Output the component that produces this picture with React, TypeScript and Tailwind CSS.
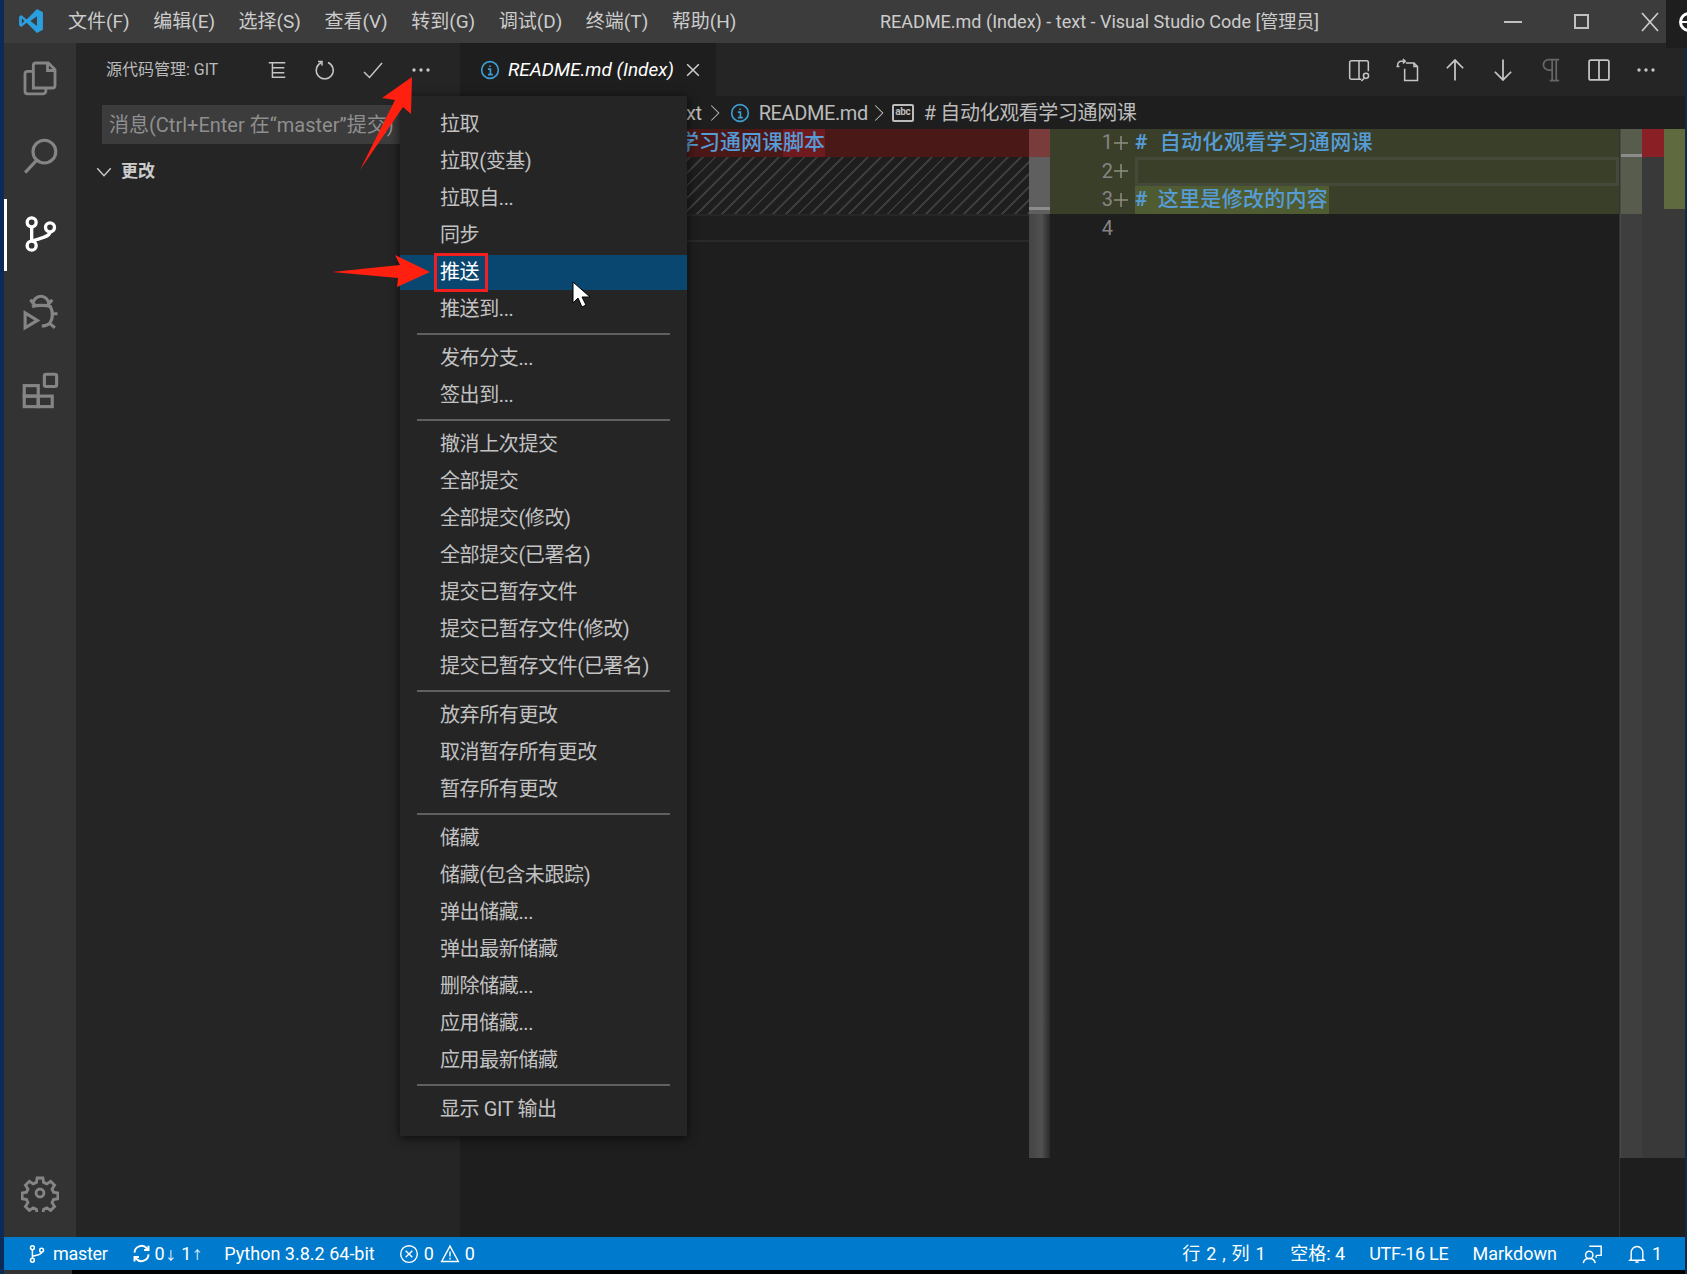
import { ReactNode } from "react";

const menuGroups = [
  ["拉取", "拉取(变基)", "拉取自...", "同步", "推送", "推送到..."],
  ["发布分支...", "签出到..."],
  ["撤消上次提交", "全部提交", "全部提交(修改)", "全部提交(已署名)", "提交已暂存文件", "提交已暂存文件(修改)", "提交已暂存文件(已署名)"],
  ["放弃所有更改", "取消暂存所有更改", "暂存所有更改"],
  ["储藏", "储藏(包含未跟踪)", "弹出储藏...", "弹出最新储藏", "删除储藏...", "应用储藏...", "应用最新储藏"],
  ["显示 GIT 输出"],
];

const menuBar = ["文件(F)", "编辑(E)", "选择(S)", "查看(V)", "转到(G)", "调试(D)", "终端(T)", "帮助(H)"];

function Icon({ size = 24, sw = 1.5, className, children }: { size?: number; sw?: number; className?: string; children: ReactNode }) {
  return (
    <svg width={size} height={size} viewBox="0 0 24 24" fill="none" stroke="currentColor" strokeWidth={sw} className={className}>
      {children}
    </svg>
  );
}

function InfoIcon({ size = 20 }: { size?: number }) {
  return (
    <Icon size={size} sw={2} className="text-[#3f9bd0] shrink-0">
      <circle cx="12" cy="12" r="10" />
      <path d="M12 6.500v2M9.500 11H12.500V17M9.500 17.500h6" />
    </Icon>
  );
}

function Dots({ color = "text-[#c5c5c5]" }: { color?: string }) {
  return (
    <svg width="20" height="6" viewBox="0 0 20 6" className={color} fill="currentColor">
      <circle cx="3" cy="3" r="1.700" />
      <circle cx="10" cy="3" r="1.700" />
      <circle cx="17" cy="3" r="1.700" />
    </svg>
  );
}

function Plus() {
  return (
    <svg width="16" height="16" viewBox="0 0 16 16" stroke="#8f8f80" strokeWidth="1.500" className="shrink-0 mt-[6px]">
      <path d="M8 1v14M1 8h14" />
    </svg>
  );
}

function ActivityBar() {
  return (
    <div className="w-[72px] shrink-0 bg-[#333333] flex flex-col items-center relative text-[#858585]">
      <div className="h-[78px] w-full flex items-center justify-center mt-[-4px]">
        <Icon size={40} sw={1.700}>
          <path d="M8 18V4.500A1.500 1.500 0 0 1 9.500 3H17l4 4v9.500a1.500 1.500 0 0 1-1.500 1.500H8z" />
          <path d="M16.500 3v4.500H21" />
          <path d="M8 8H4.500A1.500 1.500 0 0 0 3 9.500v10.500A1.500 1.500 0 0 0 4.500 21.500h9.500a1.500 1.500 0 0 0 1.500-1.500V18" />
        </Icon>
      </div>
      <div className="h-[78px] w-full flex items-center justify-center">
        <Icon size={42} sw={1.800}>
          <circle cx="14.500" cy="9.500" r="6.500" />
          <path d="M10 14.500L3.500 21.500" />
        </Icon>
      </div>
      <div className="h-[78px] w-full flex items-center justify-center text-white relative">
        <div className="absolute left-0 top-[4px] w-[3px] h-[72px] bg-white" />
        <Icon size={40} sw={2}>
          <circle cx="7" cy="5" r="2.700" />
          <circle cx="7" cy="19" r="2.700" />
          <circle cx="18" cy="8" r="2.700" />
          <path d="M7 7.700v8.600M18 10.700c0 3.300-6 3.800-11 5.600" />
        </Icon>
      </div>
      <div className="h-[78px] w-full flex items-center justify-center">
        <Icon size={42} sw={1.800}>
          <path d="M3.500 12.500v8.500l7-4.200z" />
          <path d="M8 7.500a4.500 4.500 0 0 1 9 0M6.500 5L9 8M19 5l-2.500 3M7.500 9c2-1 8.500-1 10.500 0 1.500 3 1.500 7-.5 9.500-1 1-2.500 1.500-4.500 1.500M18.500 13H22M17.500 18.500l3 2.500" />
        </Icon>
      </div>
      <div className="h-[78px] w-full flex items-center justify-center">
        <Icon size={42} sw={1.800}>
          <rect x="3" y="9.500" width="8" height="6" />
          <rect x="3" y="15.500" width="8" height="6" />
          <rect x="11" y="15.500" width="8" height="6" />
          <rect x="14.500" y="3" width="7" height="7" rx="1" />
        </Icon>
      </div>
      <div className="absolute left-0 right-0 top-[1131px] flex justify-center">
        <Icon size={38} sw={1.800}>
          <path d="M10.200 2.500h3.600l.5 2.800 2 .9 2.400-1.600 2.500 2.500-1.600 2.400.9 2 2.800.5v3.600l-2.800.5-.9 2 1.600 2.400-2.500 2.500-2.400-1.600-2 .9-.5 2.800h-3.600l-.5-2.800-2-.9-2.400 1.600-2.500-2.500 1.600-2.400-.9-2-2.800-.5v-3.600l2.800-.5.9-2-1.600-2.400 2.500-2.500 2.400 1.600 2-.9z" />
          <circle cx="12" cy="12" r="2.500" />
        </Icon>
      </div>
    </div>
  );
}

function Sidebar() {
  return (
    <div className="w-[384px] shrink-0 bg-[#252526]">
      <div className="h-[53px] flex items-center pl-[30px] text-[#bbbbbb]">
        <span className="text-[16px] w-[147px] whitespace-nowrap">源代码管理: GIT</span>
        <div className="flex items-center text-[#c5c5c5]">
          <span className="w-[48px] flex justify-center">
            <Icon size={22} sw={1.600}>
              <path d="M3 4h18M7 4v16h14M7 9.500h13M7 15h13" />
            </Icon>
          </span>
          <span className="w-[48px] flex justify-center">
            <Icon size={24} sw={1.500}>
              <path d="M8.500 4.500A8.500 8.500 0 1 0 15 4.500" />
              <path d="M5 3.500h4v4" />
            </Icon>
          </span>
          <span className="w-[48px] flex justify-center">
            <Icon size={24} sw={1.500}>
              <path d="M3 14l5.500 5.500L21 5" />
            </Icon>
          </span>
          <span className="w-[48px] flex justify-center"><Dots /></span>
        </div>
      </div>
      <div className="ml-[26px] mt-[9px] h-[39px] bg-[#3c3c3c] flex items-center pl-[7px] text-[20px] text-[#8f8f8f] whitespace-nowrap overflow-hidden">
        消息(Ctrl+Enter 在“master”提交)
      </div>
      <div className="mt-[13px] h-[30px] flex items-center pl-[19px] text-[#cccccc] gap-[8px]">
        <Icon size={18} sw={1.800}><path d="M3 7l9 10 9-10" /></Icon>
        <span className="text-[17px] font-bold">更改</span>
      </div>
    </div>
  );
}

function DiffView() {
  return (
    <div className="flex-1 flex min-h-0 bg-[#1e1e1e]">
      {/* original */}
      <div className="w-[569px] shrink-0">
        <div className="h-[28px] bg-[#4b1818] flex justify-end pr-[204px] text-[21px] leading-[27px] text-[#569cd6] font-medium whitespace-nowrap overflow-hidden">
          <span># 自动化观看学习通网课</span>
          <span className="bg-[#6f1a1f]">脚本</span>
        </div>
        <div className="h-[57px] bg-[#1e1e1e] bg-[repeating-linear-gradient(-45deg,#3c3c3c_0px,#3c3c3c_2px,#1e1e1e_2px,#1e1e1e_9px)]" />
        <div className="h-[26px] border-t-2 border-[#262626]" />
        <div className="h-[2px] bg-[#2a2a2a]" />
      </div>
      {/* splitter */}
      <div className="w-[21px] shrink-0 h-[1029px] bg-[linear-gradient(90deg,#444444,#505050_60%,#2a2a2a)] relative">
        <div className="h-[28px] bg-[#7a3b3b]" />
        <div className="h-[57px] bg-[#5f5f5f]" />
        <div className="absolute left-0 right-0 top-[78px] h-[3px] bg-[#8c8c8c]" />
      </div>
      {/* modified */}
      <div className="w-[570px] shrink-0 text-[20px] text-[#858585] border-r border-[#333333]">
        <div className="h-[28px] flex bg-[#3a3f2a] leading-[27px]">
          <div className="w-[63px] text-right shrink-0">1</div>
          <Plus />
          <div className="ml-[6px] text-[#569cd6] text-[21px] font-medium whitespace-nowrap tracking-[0.3px]"><span className="font-bold mr-[12px]">#</span>自动化观看学习通网课</div>
        </div>
        <div className="h-[29px] flex bg-[#3a3f2a] leading-[28px]">
          <div className="w-[63px] text-right shrink-0">2</div>
          <Plus />
          <div className="ml-[6px] flex-1 border-[3px] border-[#45493a] bg-[#3a3f2a]" />
        </div>
        <div className="h-[28px] flex bg-[#3a3f2a] leading-[27px]">
          <div className="w-[63px] text-right shrink-0">3</div>
          <Plus />
          <div className="ml-[6px] w-[194px] bg-[#4f5b30] text-[#569cd6] text-[21px] font-medium whitespace-nowrap tracking-[0.3px]"><span className="font-bold mr-[10px]">#</span>这里是修改的内容</div>
        </div>
        <div className="h-[29px] flex leading-[29px]">
          <div className="w-[63px] text-right shrink-0">4</div>
        </div>
      </div>
      {/* right scrollbar + overview */}
      <div className="w-[22px] shrink-0 h-[1029px] bg-[#3e3e3e] relative border-l border-[#4a4a4a]">
        <div className="h-[85px] bg-[#585c4d]" />
        <div className="absolute left-0 right-0 top-[25px] h-[3px] bg-[#8c8c8c]" />
      </div>
      <div className="w-[22px] shrink-0 h-[1029px] bg-[#393939]">
        <div className="h-[28px] bg-[#8a2025]" />
      </div>
      <div className="w-[21px] shrink-0 h-[1029px] bg-[#393939]">
        <div className="h-[80px] bg-[#5f6b3f]" />
      </div>
    </div>
  );
}

function EditorArea() {
  return (
    <div className="flex-1 min-w-0 flex flex-col">
      <div className="h-[53px] bg-[#252526] flex">
        <div className="w-[256px] bg-[#1e1e1e] flex items-center pl-[20px]">
          <InfoIcon />
          <span className="w-[167px] ml-[8px] pt-[2px] text-[19px] italic text-white whitespace-nowrap">README.md (Index)</span>
          <span className="ml-[8px] text-[#d0d0d0]">
            <Icon size={20} sw={1.800}><path d="M5 5l14 14M19 5L5 19" /></Icon>
          </span>
        </div>
        <div className="flex-1 flex items-center justify-end pr-[29px] gap-[20px] text-[#c5c5c5]">
          <Icon size={28} sw={1.300}>
            <path d="M14 20H5.500A1.500 1.500 0 0 1 4 18.500v-13A1.500 1.500 0 0 1 5.500 4h13A1.500 1.500 0 0 1 20 5.500V13M12 4v16" />
            <circle cx="18" cy="17" r="2.200" />
            <path d="M16.500 19L14 21.500" />
          </Icon>
          <Icon size={28} sw={1.300}>
            <path d="M11 6h7l3 3v12H10V11M18 6v3h3" />
            <path d="M10 4.500H7A3 3 0 0 0 4 7.500V9M8.500 2.500L10.500 4.500 8.500 6.500M3 9h2.500" />
          </Icon>
          <Icon size={28} sw={1.500}><path d="M12 21V4M5 10.500L12 3.500l7 7" /></Icon>
          <Icon size={28} sw={1.500}><path d="M12 3v17M5 13.500l7 7 7-7" /></Icon>
          <Icon size={28} sw={1.500} className="text-[#666666]"><path d="M19 3H10a4.500 4.500 0 0 0 0 9h3M13 3v18M16.500 3v18M11 21h8" /></Icon>
          <Icon size={28} sw={1.500}><rect x="3.500" y="3.500" width="17" height="17" rx="1.500" /><path d="M12 3.500v17" /></Icon>
          <span className="ml-[3px]"><Dots /></span>
        </div>
      </div>
      <div className="h-[33px] bg-[#1e1e1e] flex items-center pl-[226px] text-[20px] text-[#bbbbbb] whitespace-nowrap tracking-[-0.4px]">
        <span>xt</span>
        <span className="ml-[4px]"><Icon size={18} sw={1.400}><path d="M7 2l10 10L7 22" /></Icon></span>
        <span className="ml-[6px]"><InfoIcon /></span>
        <span className="ml-[9px]">README.md</span>
        <span className="ml-[2px]"><Icon size={18} sw={1.400}><path d="M7 2l10 10L7 22" /></Icon></span>
        <span className="ml-[4px] w-[22px] h-[18px] border-2 border-[#bbbbbb] rounded-[2px] text-[10px] leading-[12px] font-bold text-center">abc</span>
        <span className="ml-[10px]"># 自动化观看学习通网课</span>
      </div>
      <DiffView />
    </div>
  );
}

function StatusBar() {
  return (
    <div className="h-[33px] bg-[#007acc] flex items-center justify-between text-white text-[18px] whitespace-nowrap">
      <div className="flex items-center pl-[23px]">
        <Icon size={20} sw={1.800}>
          <circle cx="6.500" cy="4.500" r="2.300" />
          <circle cx="6.500" cy="19.500" r="2.300" />
          <circle cx="17.500" cy="7.500" r="2.300" />
          <path d="M6.500 6.800v10.400M17.500 9.800c0 3-6 3.500-11 5" />
        </Icon>
        <span className="ml-[6px] tracking-[-0.3px]">master</span>
        <span className="ml-[23px]">
          <Icon size={21} sw={2.200}>
            <path d="M4 11a8 8 0 0 1 14-5l2 2M20 3v5h-5M20 13a8 8 0 0 1-14 5l-2-2M4 21v-5h5" />
          </Icon>
        </span>
        <span className="ml-[3px]">0<span className="text-[12px]">↓</span> 1<span className="text-[12px]">↑</span></span>
        <span className="ml-[21px]">Python 3.8.2 64-bit</span>
        <span className="ml-[24px]">
          <Icon size={20} sw={1.700}><circle cx="12" cy="12" r="10" /><path d="M8 8l8 8M16 8l-8 8" /></Icon>
        </span>
        <span className="ml-[5px]">0</span>
        <span className="ml-[6px]">
          <Icon size={20} sw={1.700}><path d="M12 2.500L22 21H2zM12 9v6M12 16.500v2" /></Icon>
        </span>
        <span className="ml-[5px]">0</span>
      </div>
      <div className="flex items-center pr-[23px] gap-[24px]">
        <span className="tracking-[0.7px]">行 2 , 列 1</span>
        <span>空格: 4</span>
        <span className="tracking-[-0.3px]">UTF-16 LE</span>
        <span>Markdown</span>
        <Icon size={22} sw={1.600}>
          <circle cx="9" cy="13" r="4" />
          <path d="M2.500 22c.5-3.500 3-5 6.500-5s6 1.500 6.500 5M9 3.500h13v10h-5.500M16.500 13.500v2.500" />
        </Icon>
        <span className="flex items-center gap-[5px]">
          <Icon size={20} sw={1.700}>
            <path d="M5 18V10a7 7 0 0 1 14 0v8l1.500 1.500h-17zM10 21.500h4" />
          </Icon>
          1
        </span>
      </div>
    </div>
  );
}

function GitMenu() {
  return (
    <div className="absolute left-[400px] top-[96px] w-[287px] h-[1040px] bg-[#252526] shadow-[0_2px_10px_rgba(0,0,0,0.7)] pt-[10px] text-[20px] tracking-[-0.4px] text-[#c2c2c2] z-10">
      {menuGroups.map((group, i) => (
        <div key={i}>
          {i > 0 && (
            <div className="h-[12px] flex items-center px-[17px]">
              <div className="w-full h-[2px] bg-[#606060]" />
            </div>
          )}
          {group.map(item => (
            <div key={item} className="h-[37px] py-[1px]">
              <div className={`h-[35px] leading-[35px] pl-[40px] whitespace-nowrap ${item === "推送" ? "bg-[#094771] text-white" : ""}`}>
                {item}
              </div>
            </div>
          ))}
        </div>
      ))}
    </div>
  );
}

// red callouts and mouse pointer painted on top of the screenshot
function Annotations() {
  return (
    <>
      <svg className="absolute left-0 top-0 z-20 pointer-events-none" width="1687" height="1274" viewBox="0 0 1687 1274">
        <polygon points="412,77 382,98 395,100 360,170 403,107 411,114" fill="#ff2010" />
        <polygon points="332,272 400,265 395,255 430,272 397,287 398,278" fill="#ff2010" />
        <polygon points="573,282 573,303 578,298 582,307 586,305 582,297 590,297" fill="#ffffff" stroke="#000000" strokeWidth="1" />
      </svg>
      <div className="absolute left-[434px] top-[253px] w-[54px] h-[39px] border-[3px] border-[#f02020] z-20" />
    </>
  );
}

export default function App() {
  return (
    <div className="relative w-[1687px] h-[1274px] overflow-hidden bg-black flex font-['Roboto','Noto_Sans_CJK_SC',sans-serif]">
      <div className="w-[4px] shrink-0 bg-[#0b2a55]" />
      <div className="w-[1681px] shrink-0 flex flex-col">
        {/* title bar */}
        <div className="h-[43px] shrink-0 bg-[#3c3c3c] flex items-center text-[#cccccc] relative">
          <span className="w-[64px] pl-[14px] mt-[-2px]">
            <svg width="26" height="26" viewBox="0 0 24 24">
              <path d="M17.500 1l5.500 3v16l-5.500 3L8 13.500 3 17.500 1 16V8l2-1.500 5 4z" fill="#2a9fe0" />
              <path d="M17.500 7.500L11.500 12l6 4.500z" fill="#3c3c3c" />
              <path d="M3.500 9.500v5L6 12z" fill="#3c3c3c" />
            </svg>
          </span>
          <div className="flex gap-[23.5px] pt-[1px] text-[19px] whitespace-nowrap">
            {menuBar.map(m => <span key={m}>{m}</span>)}
          </div>
          <span className="absolute left-[876px] text-[18px] whitespace-nowrap">README.md (Index) - text - Visual Studio Code [管理员]</span>
          <div className="absolute left-[1500px] top-0 h-full flex items-center text-[#cccccc]">
            <span className="w-[18px] h-[2px] bg-[#c0c0c0]" />
            <span className="w-[52px]" />
            <span className="block w-[15px] h-[15px] border-2 border-[#c0c0c0]" />
            <span className="w-[49px]" />
            <Icon size={24} sw={1.700}><path d="M4 3l16 18M20 3L4 21" /></Icon>
          </div>
        </div>
        <div className="flex-1 min-h-0 flex">
          <ActivityBar />
          <Sidebar />
          <EditorArea />
        </div>
        <StatusBar />
        <div className="h-[4px] shrink-0 flex">
          <div className="w-[68px] bg-[#333333]" />
        </div>
      </div>
      <div className="flex-1 bg-[#11284a]" />
      <GitMenu />
      <div className="absolute left-[1666px] top-0 w-[21px] h-[48px] bg-[#1e1e1e] overflow-hidden z-10">
        <span className="absolute left-[13px] top-[12px] w-[20px] h-[20px] rounded-full border-[3px] border-white" />
        <span className="absolute left-[15px] top-[21px] w-[6px] h-[2px] bg-white" />
      </div>
      <Annotations />
    </div>
  );
}
